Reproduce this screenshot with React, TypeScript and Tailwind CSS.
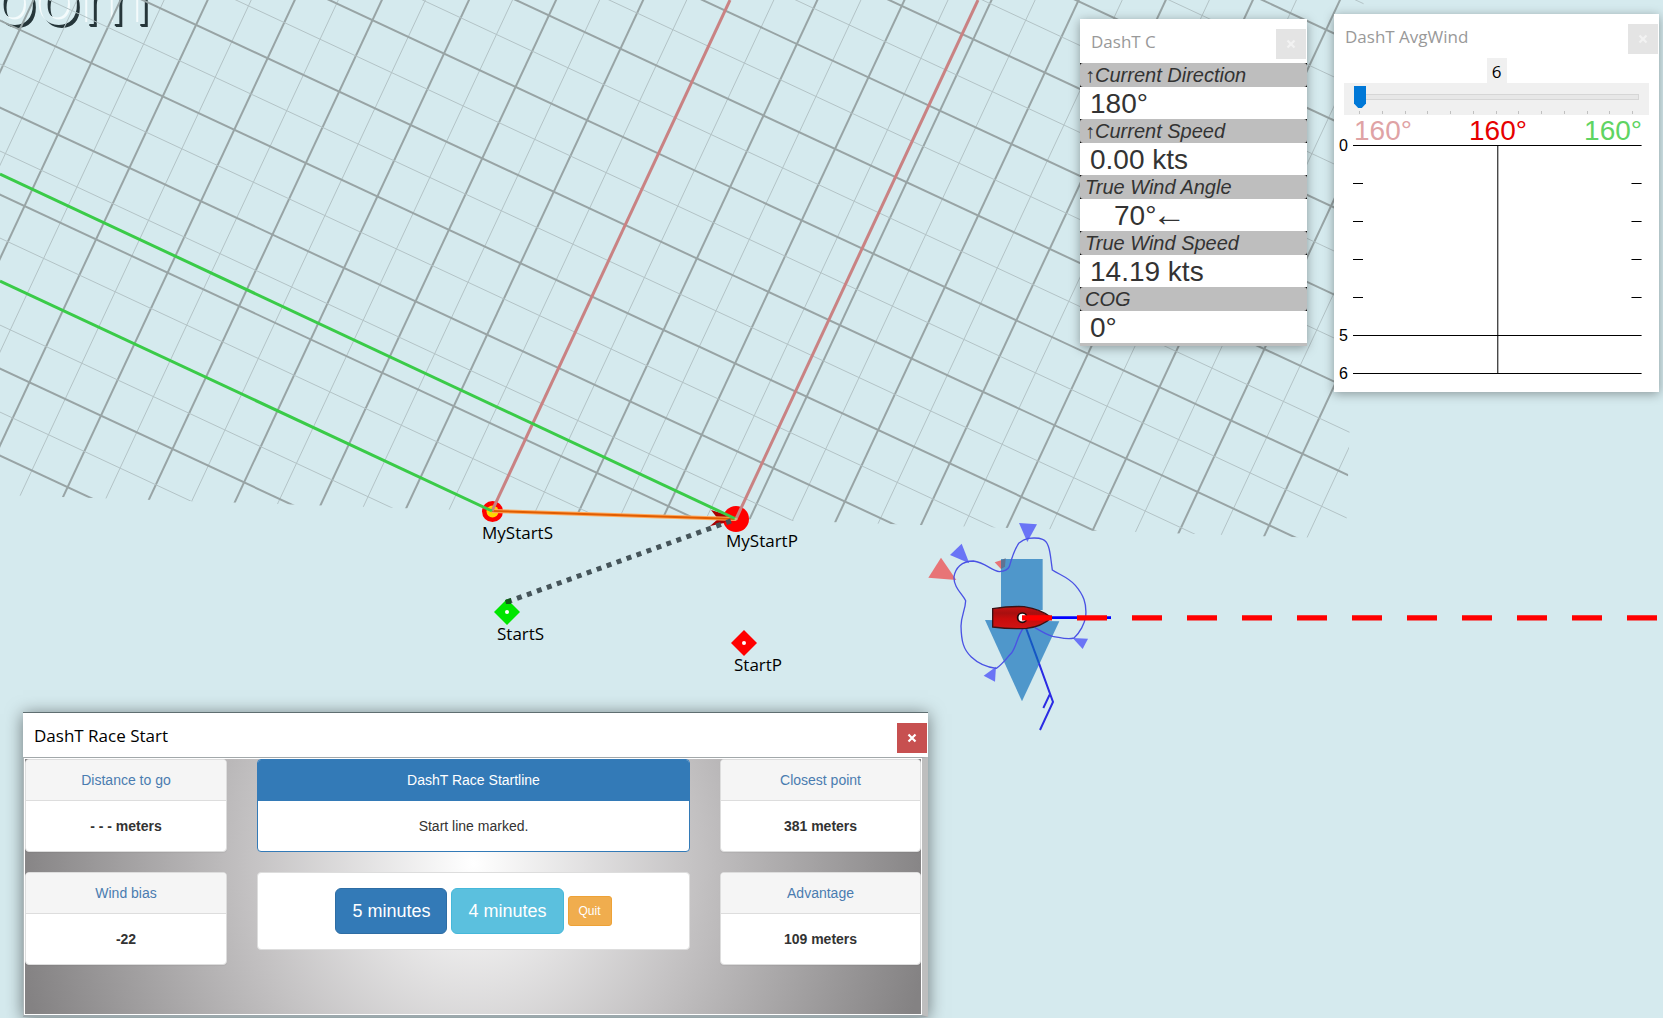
import { useState } from "react";

/* ---------- chart geometry ---------- */

const ORIGIN = { x: 492, y: 511 };
const TAN = 0.4663;
const LINE_SLOPE = 0.0325;

const range = (from: number, to: number) =>
  Array.from({ length: to - from + 1 }, (_, i) => from + i);

function gridLine(step: number, along: "up" | "across", n: number) {
  const x = ORIGIN.x + step * n;
  const y = ORIGIN.y + step * n * LINE_SLOPE;
  if (along === "up") {
    return { x1: x - 30 * TAN, y1: y + 30, x2: x + 700 * TAN, y2: y - 700 };
  }
  return { x1: x + 100, y1: y + 100 * TAN, x2: x - 3500, y2: y - 3500 * TAN };
}

function Grid() {
  const steep = range(-20, 28).filter((n) => n !== 0);
  const shallow = range(-6, 32).filter((n) => n !== 0);
  return (
    <g clipPath="url(#course)" fill="none">
      {steep.map((n) => (
        <line key={`s${n}`} {...gridLine(42.9, "up", n)} stroke={n % 2 ? "#b3c3c6" : "#98a4a5"} strokeWidth={n % 2 ? 1 : 2} />
      ))}
      {shallow.map((n) => (
        <line key={`a${n}`} {...gridLine(100.3, "across", n)} stroke={n % 2 ? "#b3c3c6" : "#98a4a5"} strokeWidth={n % 2 ? 1 : 2} />
      ))}
    </g>
  );
}

function Boat() {
  return (
    <g transform="translate(900 500) scale(0.33333)">
      <path d="M303 177H428V330H303Z" fill="#4f97cb" />
      <path d="M255 360L478 364L366 604Z" fill="#4f97cb" />
      <g fill="#6a74f6">
        <path d="M357 69L411 73L382 126Z" />
        <path d="M185 131L150 165L208 190Z" />
        <path d="M518 414L564 416L548 447Z" />
        <path d="M288 500L251 527L285 545Z" />
      </g>
      <path d="M123 173L85 233L169 240Z" fill="#e87476" />
      <path d="M284 187L303 181V207Z" fill="#e87476" />
      <path d="M303 181L317 175L315 200L303 207Z" fill="#5d7393" />
      <path
        d="M370 384C350 412 350 440 334 460C320 474 306 494 289 505C262 502 234 490 214 471C190 448 184 424 183 378C184 345 196 330 197 302C188 283 160 262 162 230C166 205 184 183 220 183C256 188 275 212 298 215C312 214 322 212 328 200C336 170 346 145 356 130C366 122 372 118 384 115C402 113 414 112 428 118C444 124 449 146 453 180L457 210C480 225 505 232 526 256C550 284 561 310 557 350C554 370 540 398 522 414C500 420 480 412 458 409C440 404 420 392 404 382"
        fill="none"
        stroke="#4a52e4"
        strokeWidth="4"
      />
      <path d="M455 353H633" stroke="#0000ff" strokeWidth="8" />
      <path d="M378 384L417 490" fill="none" stroke="#1556c4" strokeWidth="6" />
      <path d="M417 490L459 606L420 690M449 584L430 624" fill="none" stroke="#2b2be4" strokeWidth="6" />
      <path d="M278 326Q330 318 372 320Q424 328 455 353Q424 380 380 385Q330 388 278 381Z" fill="url(#hull)" stroke="#3a1216" strokeWidth="4" />
      <circle cx="367" cy="353" r="14" fill="#fff" stroke="#1c0a0c" strokeWidth="5" />
      <path d="M366 353.5H2400" stroke="#ff0000" strokeWidth="16" strokeDasharray="90 75" />
    </g>
  );
}

function Chart() {
  return (
    <svg className="absolute inset-0 h-full w-full" aria-hidden="true">
      <defs>
        <clipPath id="course">
          <path d="M-10 -10H1364L1346 538.8L-10 494.7Z" />
        </clipPath>
        <linearGradient id="hull" x1="0" y1="0" x2="0" y2="1">
          <stop offset="0" stopColor="#c41212" />
          <stop offset="0.3" stopColor="#a80f0f" />
          <stop offset="0.55" stopColor="#c80c0c" />
          <stop offset="1" stopColor="#d01414" />
        </linearGradient>
      </defs>
      <Grid />
      <circle cx="492.5" cy="511.5" r="10.5" fill="#ff0000" />
      <circle cx="492.5" cy="511.5" r="6" fill="#ffd500" />
      <circle cx="736" cy="519" r="13" fill="#ff0000" />
      <path d="M711 510L724 514L728 519L724 523L710 526L718 519Z" fill="#a80000" />
      <path d="M492 511L736 519" stroke="#ffa95c" strokeWidth="4" />
      <path d="M492 511L736 519" stroke="#e05c00" strokeWidth="2" />
      <g stroke="#c98283" strokeWidth="3">
        <path d="M492 511L730 0" />
        <path d="M736 519L978 0" />
      </g>
      <g stroke="#3acb48" strokeWidth="3">
        <path d="M0 281L492 511" />
        <path d="M0 174L736 519" />
      </g>
      <path d="M507 602L736 519" stroke="#455459" strokeWidth="5" strokeDasharray="5 5.6" />
      <path d="M507 599L520 612L507 625L494 612Z" fill="#00e600" />
      <circle cx="507" cy="612" r="2" fill="#fff" />
      <path d="M505 600L511 598V604H506Z" fill="#14571c" />
      <path d="M744 630L757 643L744 656L731 643Z" fill="#ff0000" />
      <circle cx="744" cy="643" r="2" fill="#fff" />
      <circle cx="736" cy="519" r="1.5" fill="#d8b080" />
      <Boat />
    </svg>
  );
}

/* ---------- windows ---------- */

function CloseIcon({ className }: { className: string }) {
  return (
    <svg viewBox="0 0 10 10" className={className} aria-hidden="true">
      <path d="M1.5 1.5L8.5 8.5M8.5 1.5L1.5 8.5" stroke="currentColor" strokeWidth="2.2" fill="none" />
    </svg>
  );
}

function QuietTitleBar({ title }: { title: string }) {
  return (
    <header className="flex h-11 items-start justify-between pr-px pt-2.5">
      <h2 className="pl-[11px] pt-px text-[17px] leading-6 text-[#999999]">{title}</h2>
      <button type="button" aria-label={`Close ${title}`} className="grid size-[30px] place-items-center bg-[#e4e4e4] text-[#f2f2f2]">
        <CloseIcon className="size-2.5" />
      </button>
    </header>
  );
}

const READINGS = [
  { label: "Current Direction", rising: true, value: "180°" },
  { label: "Current Speed", rising: true, value: "0.00 kts" },
  { label: "True Wind Angle", value: "70°", arrow: true },
  { label: "True Wind Speed", value: "14.19 kts" },
  { label: "COG", value: "0°" },
];

function InstrumentWindow() {
  return (
    <section className="absolute left-[1080px] top-[19px] w-[227px] border-b-[3px] border-[#bebebe] bg-white shadow-[0_2px_10px_rgba(0,0,0,0.35)]">
      <QuietTitleBar title="DashT C" />
      <dl className="font-['Liberation_Sans',Arial,sans-serif] text-[#333333]">
        {READINGS.map((r) => (
          <div key={r.label}>
            <dt className="bg-black">
              <span className="block h-6 rounded-[3px] bg-[#bebebe] pl-[5px] text-[20px] leading-6 italic">
                {r.rising && <span className="font-['Liberation_Serif',serif] not-italic">↑</span>}
                {r.label}
              </span>
            </dt>
            <dd className={r.arrow ? "flex h-8 pl-[34px] text-[28px] leading-[34px]" : "h-8 pl-2.5 text-[28px] leading-[34px]"}>
              {r.value}
              {r.arrow && <span className="-ml-1 font-['Liberation_Serif',serif] text-[34px] leading-8">←</span>}
            </dd>
          </div>
        ))}
      </dl>
    </section>
  );
}

function WindPlot() {
  const rows = ["0", "", "", "", "", "5", "6"];
  return (
    <div className="flex h-[247px] pl-[5px] pr-[17px]">
      <div className="flex w-[15px] flex-col text-[16px] leading-[38px] text-black">
        {rows.map((r, i) => (
          <span key={i} className="-translate-y-[18px] h-[38px] shrink-0">{r}</span>
        ))}
      </div>
      <svg className="h-full grow" aria-hidden="true">
        <g fill="#000">
          <rect x="0" y="0" width="100%" height="1" />
          <rect x="0" y="190" width="100%" height="1" />
          <rect x="0" y="228" width="100%" height="1" />
          <rect x="50%" y="0" width="1" height="228" />
        </g>
        <g stroke="#000">
          {[38.5, 76.5, 114.5, 152.5].map((y) => (
            <g key={y}>
              <line x1="0" x2="10" y1={y} y2={y} />
              <line x1="96.5%" x2="100%" y1={y} y2={y} />
            </g>
          ))}
        </g>
      </svg>
    </div>
  );
}

function AvgWindWindow() {
  const [minutes, setMinutes] = useState(6);
  return (
    <section className="absolute left-[1334px] top-3.5 w-[325px] bg-white shadow-[0_2px_10px_rgba(0,0,0,0.35)]">
      <QuietTitleBar title="DashT AvgWind" />
      <div className="font-['Liberation_Sans',Arial,sans-serif]">
        <output htmlFor="minutes" className="mx-auto block h-[25px] w-5 bg-[#f0f0f0] text-center font-['Open_Sans','Noto_Sans',sans-serif] text-[17px] leading-[27px] text-black">
          {minutes}
        </output>
        <div className="mx-2.5 h-8 bg-[#f0f0f0] px-2.5 pt-[3px]">
          <input
            id="minutes"
            type="range"
            min={6}
            max={30}
            value={minutes}
            aria-label="Averaging minutes"
            onChange={(e) => setMinutes(Number(e.target.value))}
            className="block h-[22px] w-full appearance-none bg-transparent [&::-webkit-slider-runnable-track]:h-[6px] [&::-webkit-slider-runnable-track]:border [&::-webkit-slider-runnable-track]:border-[#d6d6d6] [&::-webkit-slider-runnable-track]:bg-[#e7e7e7] [&::-webkit-slider-thumb]:-mt-[9px] [&::-webkit-slider-thumb]:-ml-px [&::-webkit-slider-thumb]:h-[22px] [&::-webkit-slider-thumb]:w-3 [&::-webkit-slider-thumb]:appearance-none [&::-webkit-slider-thumb]:bg-[#0078d7] [&::-webkit-slider-thumb]:[clip-path:polygon(0_0,100%_0,100%_80%,65%_100%,35%_100%,0_80%)]"
          />
          <div className="ml-[5px] mr-1.5 mt-[3px] flex justify-between">
            {range(0, 12).map((n) => (
              <span key={n} className="h-[3px] w-px bg-[#c0c0c0]" />
            ))}
          </div>
        </div>
        <div className="flex h-[30px] justify-between pl-5 pr-[17px] text-[28px] leading-8">
          <span className="text-[#dfa3a5]">160°</span>
          <span className="text-[#e60000]">160°</span>
          <span className="text-[#5fd463]">160°</span>
        </div>
        <WindPlot />
      </div>
    </section>
  );
}

function Panel({ title, children }: { title: string; children: string }) {
  return (
    <article className="overflow-hidden rounded border border-[#dddddd] bg-white text-center text-[14px] leading-5 shadow-[0_1px_1px_rgba(0,0,0,0.05)]">
      <h3 className="border-b border-[#dddddd] bg-[#f5f5f5] px-4 py-2.5 text-[#4a7cb0]">{title}</h3>
      <p className="p-[15px] font-bold text-[#333333]">{children}</p>
    </article>
  );
}

function RaceStartWindow() {
  return (
    <section className="absolute left-[23px] top-[712px] w-[905px] border-t border-[#5f6e71] bg-white shadow-[0_2px_16px_rgba(0,0,0,0.5)]">
      <header className="flex h-11 items-start justify-between pr-px pt-2.5">
        <h2 className="pl-[11px] pt-px text-[17px] leading-6 text-black">DashT Race Start</h2>
        <button type="button" aria-label="Close DashT Race Start" className="grid size-[30px] place-items-center bg-[#c75050] text-white">
          <CloseIcon className="size-2.5" />
        </button>
      </header>
      <div className="border-t border-r-[6px] border-b-2 border-l border-t-[#a2a8aa] border-r-[#bebebe] border-b-[#9da9ad] border-l-[#b0b8ba]">
        <div className="grid h-[257px] grid-cols-[202fr_433fr_201fr] content-start gap-x-[30px] border border-white bg-[radial-gradient(ellipse_460px_500px_at_50%_41%,#ffffff_0%,#c2c0c1_50%,#848283_100%)] font-['Liberation_Sans',Arial,sans-serif]">
          <div className="flex flex-col gap-5">
            <Panel title="Distance to go">- - - meters</Panel>
            <Panel title="Wind bias">-22</Panel>
          </div>
          <div className="flex flex-col gap-5">
            <article className="overflow-hidden rounded border border-[#337ab7] bg-white text-center text-[14px] leading-5">
              <h3 className="border-b border-[#337ab7] bg-[#337ab7] px-4 py-2.5 text-white">DashT Race Startline</h3>
              <p className="p-[15px] text-[#333333]">Start line marked.</p>
            </article>
            <div className="flex items-center justify-center gap-1 rounded border border-[#dddddd] bg-white p-[15px]">
              <button type="button" className="rounded-md border border-[#2e6da4] bg-[#337ab7] px-4 py-2.5 text-[18px] leading-6 text-white">5 minutes</button>
              <button type="button" className="rounded-md border border-[#46b8da] bg-[#5bc0de] px-4 py-2.5 text-[18px] leading-6 text-white">4 minutes</button>
              <button type="button" className="rounded-[3px] border border-[#eea236] bg-[#f0ad4e] px-2.5 py-[5px] text-[12px] leading-[18px] text-white">Quit</button>
            </div>
          </div>
          <div className="flex flex-col gap-5">
            <Panel title="Closest point">381 meters</Panel>
            <Panel title="Advantage">109 meters</Panel>
          </div>
        </div>
      </div>
    </section>
  );
}

export default function App() {
  return (
    <main className="relative h-screen w-full overflow-hidden bg-[#d5eaee] font-['Open_Sans','Noto_Sans',sans-serif]">
      <span className="absolute right-[calc(100%-151px)] top-[-43px] font-['DejaVu_Sans',Verdana,sans-serif] text-[72px] leading-[84px] text-[#d5eaee] [text-shadow:-2px_-2px_0_#f4fbfc,2px_2px_0_#26363a,3px_3px_0_#26363a]">
        Zoom
      </span>
      <Chart />
      <span className="absolute left-[482px] top-[521px] text-[17px] leading-6 text-black">MyStartS</span>
      <span className="absolute left-[726px] top-[529px] text-[17px] leading-6 text-black">MyStartP</span>
      <span className="absolute left-[497px] top-[622px] text-[17px] leading-6 text-black">StartS</span>
      <span className="absolute left-[734px] top-[653px] text-[17px] leading-6 text-black">StartP</span>
      <InstrumentWindow />
      <AvgWindWindow />
      <RaceStartWindow />
    </main>
  );
}
